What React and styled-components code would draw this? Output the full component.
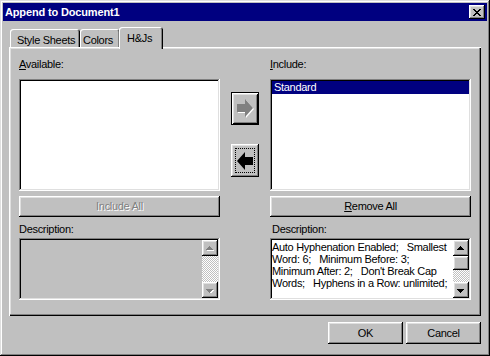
import React from 'react';
import styled, { createGlobalStyle, css } from 'styled-components';

const GlobalStyle = createGlobalStyle`
  html, body { margin: 0; padding: 0; background: #c0c0c0; }
  body { font-family: "Liberation Sans", Arial, sans-serif; font-size: 11px; color: #000; }
  * { box-sizing: border-box; }
`;

const raised = css`
  box-shadow: inset -1px -1px #000, inset 1px 1px #fff, inset -2px -2px #808080, inset 2px 2px #dfdfdf;
`;
const sunken = css`
  box-shadow: inset -1px -1px #fff, inset 1px 1px #808080, inset -2px -2px #dfdfdf, inset 2px 2px #000;
`;

const Window = styled.div`
  width: 490px;
  height: 356px;
  background: #c0c0c0;
  padding: 3px;
  display: flex;
  flex-direction: column;
  box-shadow: inset -1px -1px #000, inset 1px 1px #dfdfdf, inset -2px -2px #808080, inset 2px 2px #fff;
`;

const TitleBar = styled.div`
  height: 18px;
  flex: none;
  background: #000080;
  color: #fff;
  font-weight: bold;
  letter-spacing: -0.15px;
  display: flex;
  align-items: center;
  justify-content: space-between;
  padding: 0 2px 0 2px;
`;

const CloseButton = styled.div`
  width: 16px;
  height: 14px;
  background: #c0c0c0;
  ${raised};
  display: flex;
  align-items: center;
  justify-content: center;
  padding-right: 1px;
`;

const Content = styled.div`
  flex: 1;
  display: flex;
  flex-direction: column;
  padding: 6px 6px 0 6px;
  letter-spacing: -0.3px;
`;

const TabStrip = styled.div`
  height: 20px;
  display: flex;
  align-items: flex-end;
  padding-left: 1px;
  position: relative;
  z-index: 1;
`;

const Tab = styled.div`
  width: ${p => p.$w}px;
  height: ${p => (p.$active ? 22 : 18)}px;
  margin-bottom: ${p => (p.$active ? -2 : 0)}px;
  margin-left: ${p => p.$ml || 0}px;
  padding: 5px 0 0 ${p => p.$pad}px;
  line-height: 13px;
  background: #c0c0c0;
  border-top-left-radius: 3px;
  border-top-right-radius: 3px;
  box-shadow: inset 1px 1px #fff, inset -1px 0 #000, inset -2px 0 #808080;
  white-space: nowrap;
`;

const Panel = styled.div`
  height: 269px;
  flex: none;
  background: #c0c0c0;
  box-shadow: inset 1px 1px #fff, inset -1px -1px #000, inset -2px -2px #808080, inset 2px 2px #dfdfdf;
  display: grid;
  grid-template-columns: 201px 28px 201px;
  column-gap: 11px;
  padding: 11px 10px 0 10px;
  align-items: start;
`;

const Column = styled.div`
  display: flex;
  flex-direction: column;
`;

const Label = styled.div`
  height: 13px;
  line-height: 13px;
  margin-top: ${p => p.$mt || 0}px;
  padding-left: ${p => p.$pl || 0}px;
  white-space: nowrap;
`;

const ListBox = styled.div`
  margin-top: 8px;
  height: 112px;
  background: #fff;
  ${sunken};
  padding: 2px;
`;

const ListItem = styled.div`
  height: 13px;
  line-height: 13px;
  padding-left: 2px;
  background: ${p => (p.$selected ? '#000080' : 'transparent')};
  color: ${p => (p.$selected ? '#fff' : '#000')};
`;

const PushButton = styled.div`
  height: ${p => p.$h || 21}px;
  width: ${p => (p.$w ? `${p.$w}px` : 'auto')};
  margin-top: ${p => p.$mt || 0}px;
  background: #c0c0c0;
  ${raised};
  display: flex;
  align-items: center;
  justify-content: center;
  line-height: 13px;
  color: ${p => (p.$disabled ? '#808080' : '#000')};
  text-shadow: ${p => (p.$disabled ? '1px 1px 0 #fff' : 'none')};
  white-space: nowrap;
`;

const ArrowColumn = styled.div`
  display: flex;
  flex-direction: column;
  gap: 19px;
  padding-top: 34px;
`;

const ArrowButton = styled.div`
  width: 28px;
  height: 33px;
  background: #c0c0c0;
  display: flex;
  align-items: center;
  justify-content: center;
  ${p =>
    p.$default
      ? css`box-shadow: inset 0 0 0 1px #000, inset 2px 2px #fff, inset -2px -2px #000, inset 3px 3px #dfdfdf, inset -3px -3px #808080;`
      : raised};
`;

const FocusRing = styled.div`
  width: 20px;
  height: 25px;
  border: 1px dotted #000;
  display: flex;
  align-items: center;
  justify-content: center;
`;

const DescBox = styled.div`
  margin-top: 2px;
  height: 62px;
  background: ${p => p.$bg};
  ${sunken};
  padding: 2px;
  display: flex;
`;

const DescText = styled.div`
  flex: 1;
  padding: 1px 0 0 0;
  line-height: 12px;
  white-space: pre;
  overflow: hidden;
`;

const Scrollbar = styled.div`
  width: 16px;
  display: flex;
  flex-direction: column;
`;

const ScrollButton = styled.div`
  height: ${p => p.$h || 16}px;
  flex: none;
  background: #c0c0c0;
  ${raised};
  display: flex;
  align-items: center;
  justify-content: center;
`;

const Track = styled.div`
  flex: 1;
  background-color: #c0c0c0;
  background-image: conic-gradient(#fff 25%, #c0c0c0 0 50%, #fff 0 75%, #c0c0c0 0);
  background-size: 2px 2px;
`;

const Footer = styled.div`
  display: flex;
  justify-content: flex-end;
  gap: 3px;
  margin-top: 6px;
`;

const U = styled.span`
  text-decoration: underline;
  text-underline-offset: 1px;
`;

const CloseGlyph = () => (
  <svg width="8" height="7" viewBox="0 0 8 7" shapeRendering="crispEdges">
    {[
      [0, 0, 2], [6, 0, 2], [1, 1, 2], [5, 1, 2], [2, 2, 4], [3, 3, 2],
      [2, 4, 4], [1, 5, 2], [5, 5, 2], [0, 6, 2], [6, 6, 2],
    ].map(([x, y, w], i) => (
      <rect key={i} x={x} y={y} width={w} height="1" fill="#000" />
    ))}
  </svg>
);

const RightArrow = () => (
  <svg width="17" height="19" viewBox="0 0 17 19">
    <path d="M1 6 H9 V1 L17 10 L9 19 V14 H1 Z" fill="#fff" />
    <path d="M0 5 H8 V0 L16 9 L8 18 V13 H0 Z" fill="#808080" />
  </svg>
);

const LeftArrow = () => (
  <svg width="16" height="18" viewBox="0 0 16 18">
    <path d="M16 5 H8 V0 L0 9 L8 18 V13 H16 Z" fill="#000" />
  </svg>
);

const TRI = 'M3 0h1v1h1v1h1v1h1v1H0v-1h1v-1h1v-1h1z';

const ScrollArrow = ({ down, disabled }) => (
  <svg width="8" height="5" viewBox="0 0 8 5" shapeRendering="crispEdges"
       style={down ? { transform: 'scaleY(-1)' } : undefined}>
    {disabled && <path d={TRI} transform={down ? 'translate(1,-1)' : 'translate(1,1)'} fill="#fff" />}
    <path d={TRI} fill={disabled ? '#808080' : '#000'} />
  </svg>
);

export default function App() {
  return (
    <>
      <GlobalStyle />
      <Window>
        <TitleBar>
          <span>Append to Document1</span>
          <CloseButton><CloseGlyph /></CloseButton>
        </TitleBar>
        <Content>
          <TabStrip>
            <Tab $w={70} $pad={7}>Style Sheets</Tab>
            <Tab $w={40} $pad={3}>Colors</Tab>
            <Tab $w={44} $pad={8} $ml={-1} $active>H&amp;Js</Tab>
          </TabStrip>
          <Panel>
            <Column>
              <Label><U>A</U>vailable:</Label>
              <ListBox />
              <PushButton $mt={5} $disabled>Include All</PushButton>
              <Label $mt={6}>Description:</Label>
              <DescBox $bg="#c0c0c0">
                <DescText />
                <Scrollbar>
                  <ScrollButton><ScrollArrow disabled /></ScrollButton>
                  <Track />
                  <ScrollButton><ScrollArrow down disabled /></ScrollButton>
                </Scrollbar>
              </DescBox>
            </Column>
            <ArrowColumn>
              <ArrowButton $default><RightArrow /></ArrowButton>
              <ArrowButton><FocusRing><LeftArrow /></FocusRing></ArrowButton>
            </ArrowColumn>
            <Column>
              <Label><U>I</U>nclude:</Label>
              <ListBox>
                <ListItem $selected>Standard</ListItem>
              </ListBox>
              <PushButton $mt={5}><span><U>R</U>emove All</span></PushButton>
              <Label $mt={6} $pl={2}>Description:</Label>
              <DescBox $bg="#fff">
                <DescText>
                  {'Auto Hyphenation Enabled;   Smallest\nWord: 6;   Minimum Before: 3;\nMinimum After: 2;   Don\'t Break Cap\nWords;   Hyphens in a Row: unlimited;'}
                </DescText>
                <Scrollbar>
                  <ScrollButton><ScrollArrow /></ScrollButton>
                  <ScrollButton $h={14} />
                  <Track />
                  <ScrollButton><ScrollArrow down /></ScrollButton>
                </Scrollbar>
              </DescBox>
            </Column>
          </Panel>
          <Footer>
            <PushButton $w={75} $h={22}>OK</PushButton>
            <PushButton $w={75} $h={22}>Cancel</PushButton>
          </Footer>
        </Content>
      </Window>
    </>
  );
}
